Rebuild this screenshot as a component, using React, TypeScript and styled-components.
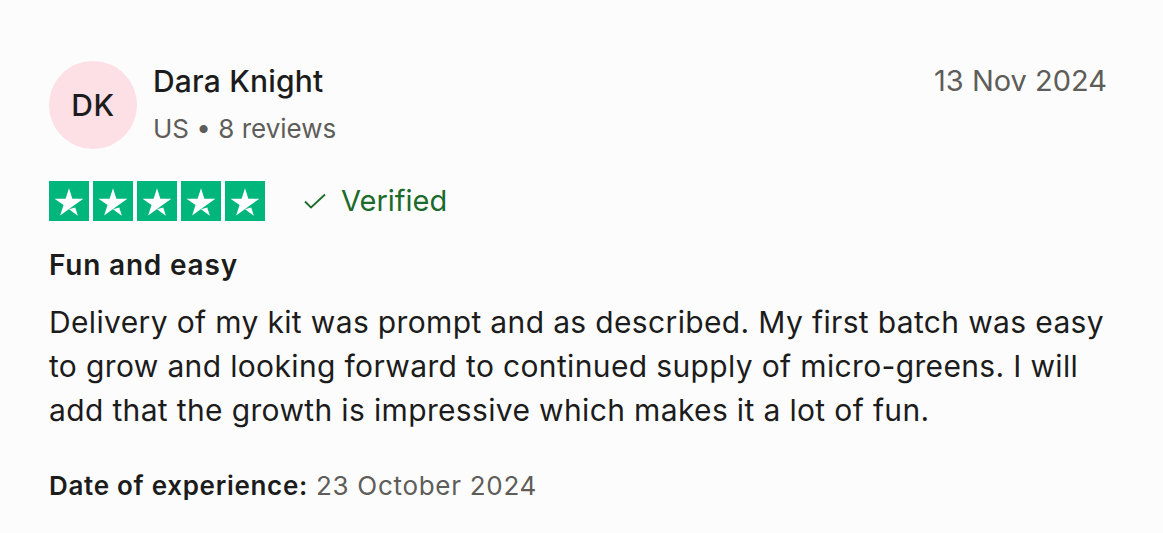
import React from "react";
import styled, { createGlobalStyle } from "styled-components";

const Global = createGlobalStyle`
  html, body { margin: 0; padding: 0; background: #fcfcfc; }
  body { font-family: Inter, "Helvetica Neue", Arial, sans-serif; -webkit-font-smoothing: antialiased; }
`;

const Card = styled.article`
  padding: 61px 56px 0 49px;
  display: flex;
  flex-direction: column;
  color: #1c1c1c;
`;

const Header = styled.header`
  display: flex;
  align-items: flex-start;
  gap: 16px;
`;

const Avatar = styled.div`
  width: 88px;
  height: 88px;
  border-radius: 50%;
  background: #fde0e6;
  display: flex;
  align-items: center;
  justify-content: center;
  font-size: 30px;
  font-weight: 500;
  letter-spacing: 0.5px;
  color: #1c1c1c;
  flex-shrink: 0;
`;

const Who = styled.div`
  display: flex;
  flex-direction: column;
  flex: 1;
  padding-top: 2px;
`;

const Name = styled.div`
  font-size: 30px;
  font-weight: 500;
  line-height: 36px;
  letter-spacing: 0.2px;
`;

const Meta = styled.div`
  margin-top: 14px;
  font-size: 26px;
  line-height: 32px;
  color: #5e5d59;
`;

const DateText = styled.time`
  font-size: 29px;
  line-height: 36px;
  color: #5e5d59;
  padding-top: 2px;
`;

const RatingRow = styled.div`
  margin-top: 32px;
  display: flex;
  align-items: center;
  gap: 38px;
`;

const Stars = styled.div`
  display: flex;
  gap: 4px;
`;

const StarBox = styled.div`
  width: 40px;
  height: 40px;
  background: #00b67a;
  display: flex;
  align-items: center;
  justify-content: center;
`;

const Verified = styled.div`
  display: flex;
  align-items: center;
  gap: 14px;
  color: #1b6b2b;
  font-size: 29px;
  line-height: 36px;
`;

const Title = styled.h2`
  margin: 26px 0 0;
  font-size: 28px;
  font-weight: 600;
  line-height: 36px;
  letter-spacing: 0.8px;
`;

const Body = styled.p`
  margin: 17px 0 0;
  font-size: 30px;
  line-height: 44px;
  letter-spacing: 0.35px;
`;

const Experience = styled.p`
  margin: 38px 0 0;
  font-size: 26px;
  line-height: 32px;
  letter-spacing: 0.7px;
  color: #5e5d59;
`;

const Label = styled.strong`
  font-weight: 600;
  color: #1c1c1c;
`;

const Star = () => (
  <svg width="40" height="40" viewBox="0 0 46 46">
    <path
      d="M23 32.4l7.2-1.8 3 9.4L23 32.4zM39.6 20.3H26.9L23 8.3l-3.9 12H6.4l10.3 7.4-3.9 12 10.3-7.4 6.3-4.6 10.2-7.4z"
      fill="#fff"
    />
  </svg>
);

const Check = () => (
  <svg width="24" height="24" viewBox="0 0 24 24" fill="none">
    <path d="M2 12.5l6 6L22 5.5" stroke="#1b6b2b" strokeWidth="1.8" />
  </svg>
);

export default function App() {
  return (
    <>
      <Global />
      <Card>
        <Header>
          <Avatar>DK</Avatar>
          <Who>
            <Name>Dara Knight</Name>
            <Meta>US • 8 reviews</Meta>
          </Who>
          <DateText>13 Nov 2024</DateText>
        </Header>
        <RatingRow>
          <Stars>
            {[0, 1, 2, 3, 4].map((i) => (
              <StarBox key={i}>
                <Star />
              </StarBox>
            ))}
          </Stars>
          <Verified>
            <Check />
            Verified
          </Verified>
        </RatingRow>
        <Title>Fun and easy</Title>
        <Body>
          Delivery of my kit was prompt and as described. My first batch was easy
          to grow and looking forward to continued supply of micro-greens. I will
          add that the growth is impressive which makes it a lot of fun.
        </Body>
        <Experience>
          <Label>Date of experience:</Label> 23 October 2024
        </Experience>
      </Card>
    </>
  );
}
